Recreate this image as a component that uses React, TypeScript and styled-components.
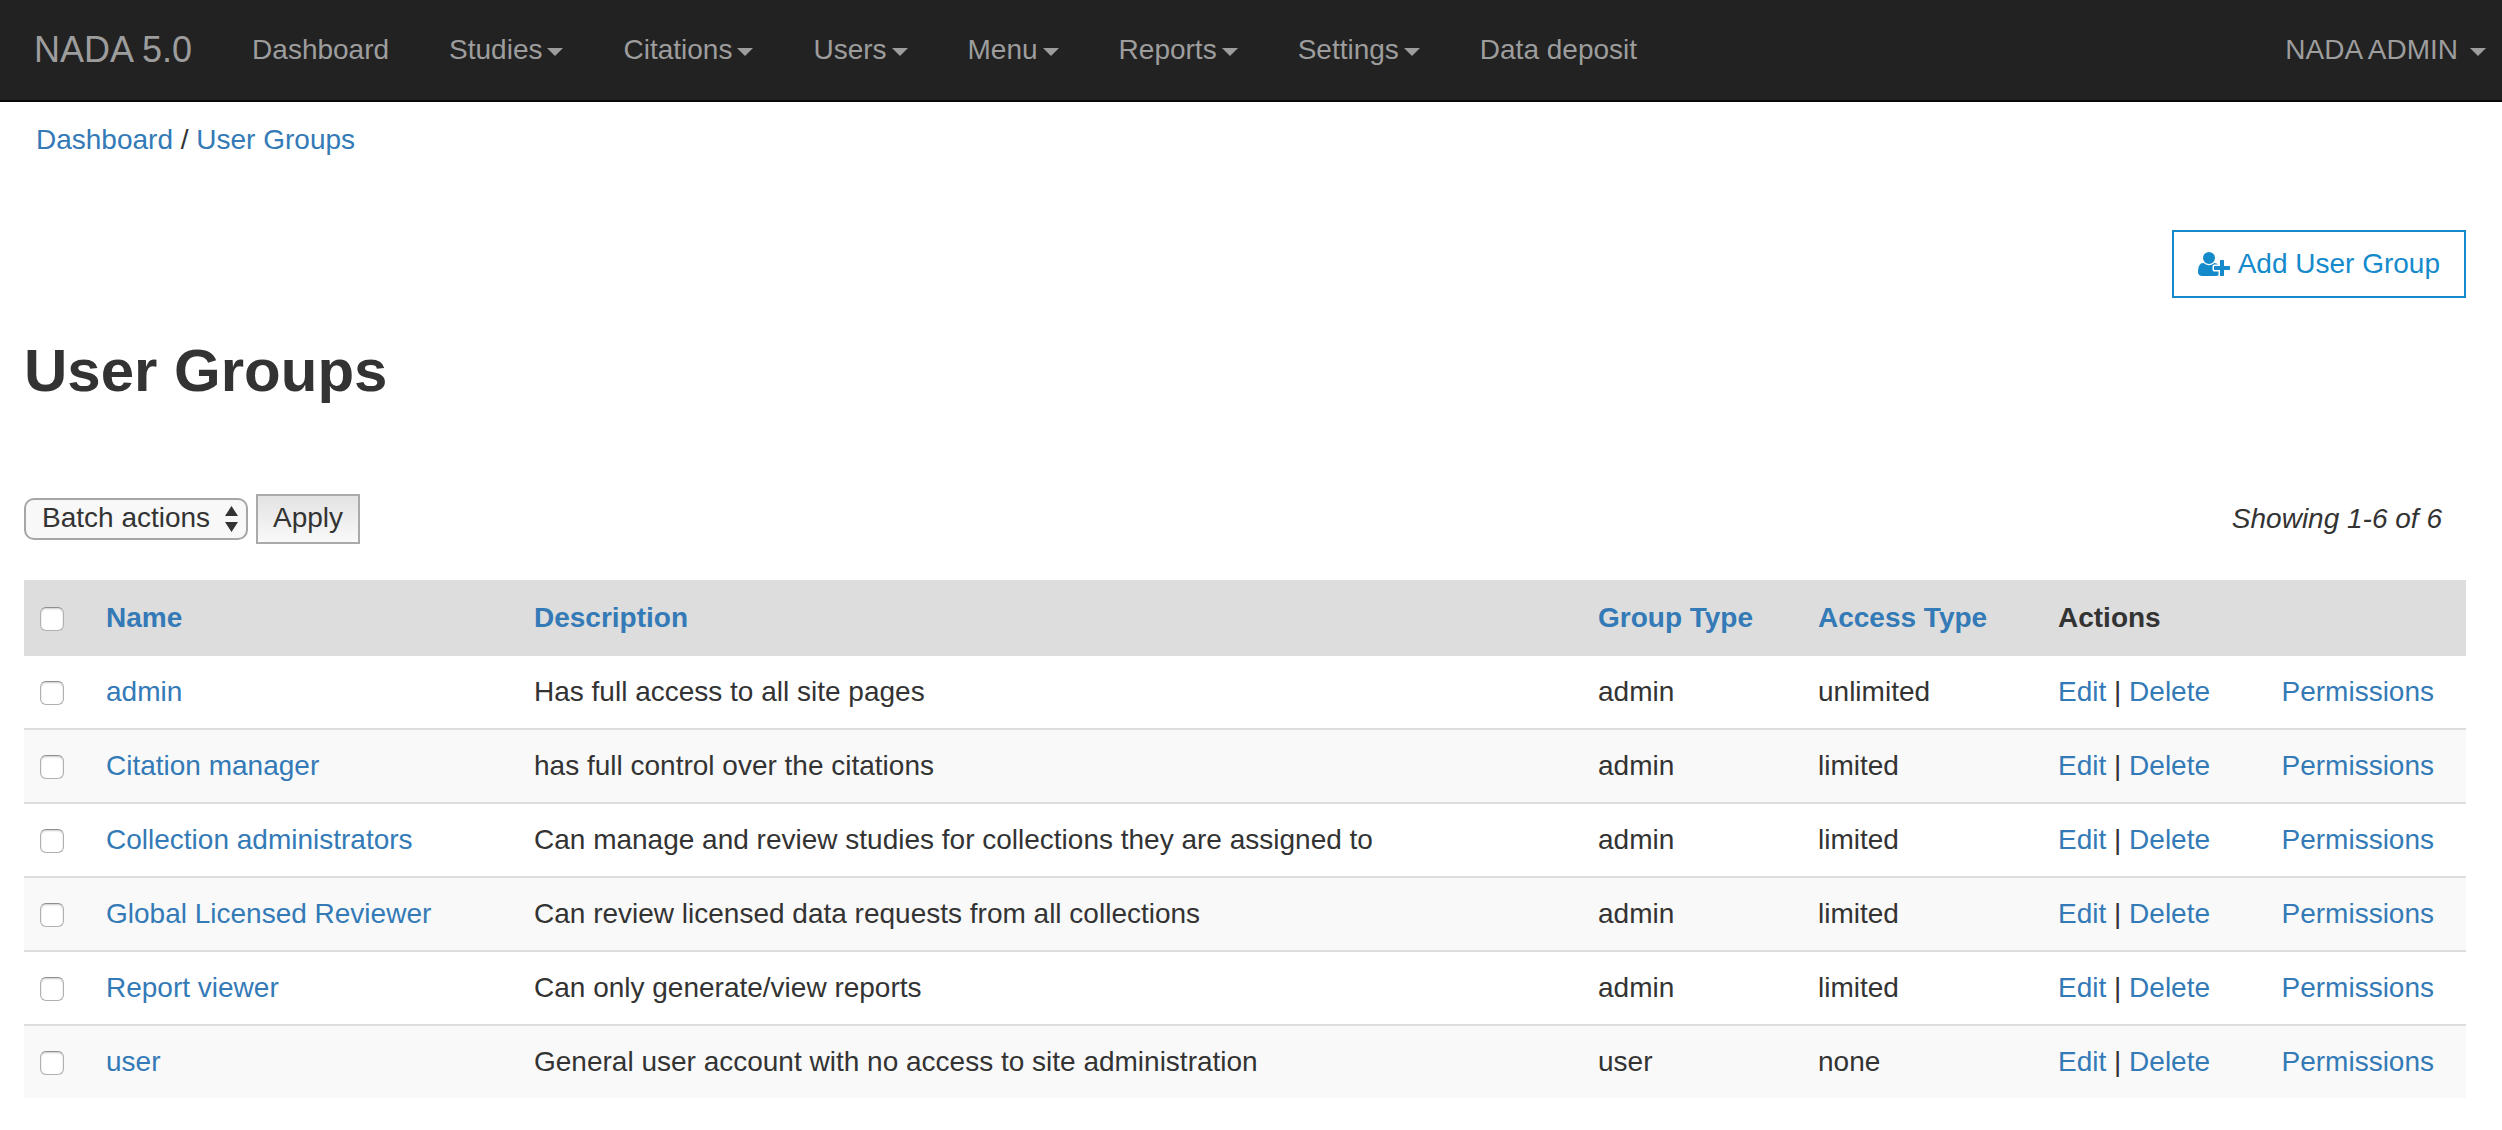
import React, { useState } from "react";
import styled, { createGlobalStyle } from "styled-components";

const GlobalStyle = createGlobalStyle`
  *, *::before, *::after { box-sizing: border-box; }
  body {
    margin: 0;
    background: #fff;
    color: #333;
    font-family: "Helvetica Neue", "Liberation Sans", Helvetica, Arial, sans-serif;
    font-size: 28px;
    line-height: 40px;
  }
`;

const Link = styled.a`
  color: #337ab7;
  text-decoration: none;
  &:hover { text-decoration: underline; }
`;

const Navbar = styled.nav`
  display: flex;
  align-items: center;
  min-height: 102px;
  padding-left: 4px;
  background: #222;
  border-bottom: 2px solid #080808;
`;

const Brand = styled.a`
  padding: 0 30px;
  color: #9d9d9d;
  font-size: 36px;
  text-decoration: none;
  white-space: nowrap;
`;

const NavList = styled.ul`
  display: flex;
  flex: 1;
  margin: 0;
  padding: 0;
  list-style: none;
`;

const NavItem = styled.li<{ $end?: boolean }>`
  margin-left: ${(p) => (p.$end ? "auto" : "0")};
`;

const NavLink = styled.a<{ $gap?: number; $edge?: boolean }>`
  display: flex;
  align-items: center;
  gap: ${(p) => p.$gap ?? 5}px;
  padding: 30px ${(p) => (p.$edge ? 16 : 30)}px 30px 30px;
  color: #9d9d9d;
  text-decoration: none;
  white-space: nowrap;
`;

const Caret = styled.span`
  width: 0;
  height: 0;
  margin-top: 4px;
  border-top: 8px solid currentColor;
  border-left: 8px solid transparent;
  border-right: 8px solid transparent;
`;

const Breadcrumb = styled.nav`
  padding: 18px 36px;
`;

const Page = styled.main`
  padding: 0 36px 32px 24px;
`;

const ActionBar = styled.div`
  display: flex;
  justify-content: flex-end;
  padding-top: 52px;
`;

const AddButton = styled.a`
  display: flex;
  align-items: center;
  gap: 8px;
  padding: 12px 24px;
  border: 2px solid #158acb;
  color: #158acb;
  text-decoration: none;
  white-space: nowrap;
`;

const Title = styled.h1`
  margin: 38px 0 88px;
  font-size: 60px;
  line-height: 70px;
`;

const Toolbar = styled.form`
  display: flex;
  align-items: center;
  gap: 8px;
  margin-bottom: 36px;
`;

const SelectBox = styled.div`
  position: relative;
  color: #333;
`;

const Select = styled.select`
  display: block;
  appearance: none;
  width: 224px;
  height: 42px;
  padding: 0 32px 2px 16px;
  border: 2px solid #a6a6a6;
  border-radius: 10px;
  background: #f8f8f8;
  color: inherit;
  font: inherit;
  line-height: 36px;
`;

const SelectArrows = styled.svg`
  position: absolute;
  top: 8px;
  right: 10px;
  pointer-events: none;
`;

const ApplyButton = styled.button`
  height: 50px;
  padding: 0 15px 2px;
  border: 2px solid #aaa;
  background: linear-gradient(#e3e3e3, #f9f9f9);
  color: inherit;
  font: inherit;
`;

const Summary = styled.em`
  margin-left: auto;
  padding-right: 24px;
`;

const Table = styled.table`
  width: 100%;
  border-collapse: separate;
  border-spacing: 0;
  table-layout: fixed;
`;

const Column = styled.col<{ $width?: number }>`
  width: ${(p) => (p.$width ? `${p.$width}px` : "auto")};
`;

const HeadCell = styled.th`
  height: 74px;
  padding: 2px 16px 0;
  background: #ddd;
  text-align: left;
`;

const Row = styled.tr`
  &:nth-child(even) { background: #f9f9f9; }
`;

const Cell = styled.td`
  height: 74px;
  padding: 0 16px;
  border-top: 2px solid #ddd;
`;

const RowLinks = styled.div`
  display: flex;
  justify-content: space-between;
  padding-right: 16px;
`;

const Checkbox = styled.input`
  display: block;
  appearance: none;
  width: 24px;
  height: 24px;
  margin: 2px 0 0;
  border: 1px solid #b0b0b0;
  border-top-color: #8e8e8e;
  border-radius: 6px;
  background: #fff;
  box-shadow: inset 0 1px 2px #ccc;
  &:checked { background: #337ab7; }
`;

const menu = [
  { label: "Dashboard" },
  { label: "Studies", dropdown: true },
  { label: "Citations", dropdown: true },
  { label: "Users", dropdown: true },
  { label: "Menu", dropdown: true },
  { label: "Reports", dropdown: true },
  { label: "Settings", dropdown: true },
  { label: "Data deposit" },
];

const groups = [
  { name: "admin", description: "Has full access to all site pages", type: "admin", access: "unlimited" },
  { name: "Citation manager", description: "has full control over the citations", type: "admin", access: "limited" },
  { name: "Collection administrators", description: "Can manage and review studies for collections they are assigned to", type: "admin", access: "limited" },
  { name: "Global Licensed Reviewer", description: "Can review licensed data requests from all collections", type: "admin", access: "limited" },
  { name: "Report viewer", description: "Can only generate/view reports", type: "admin", access: "limited" },
  { name: "user", description: "General user account with no access to site administration", type: "user", access: "none" },
];

function UserPlusIcon() {
  return (
    <svg width="32" height="28" viewBox="0 0 2048 1792" fill="currentColor" aria-hidden="true">
      <path d="M704 896q-159 0-271.5-112.5t-112.5-271.5 112.5-271.5 271.5-112.5 271.5 112.5 112.5 271.5-112.5 271.5-271.5 112.5zm960 128h352q13 0 22.5 9.5t9.5 22.5v192q0 13-9.5 22.5t-22.5 9.5h-352v352q0 13-9.5 22.5t-22.5 9.5h-192q-13 0-22.5-9.5t-9.5-22.5v-352h-352q-13 0-22.5-9.5t-9.5-22.5v-192q0-13 9.5-22.5t22.5-9.5h352v-352q0-13 9.5-22.5t22.5-9.5h192q13 0 22.5 9.5t9.5 22.5v352zm-736 224q0 52 38 90t90 38h256v238q-68 50-171 50h-874q-121 0-194-69t-73-190q0-53 3.5-103.5t14-109 26.5-108.5 43-97.5 62-81 85.5-53.5 111.5-20q19 0 39 17 79 61 154.5 91.5t164.5 30.5 164.5-30.5 154.5-91.5q20-17 39-17 132 0 217 96h-223q-52 0-90 38t-38 90v192z" />
    </svg>
  );
}

export default function App() {
  const [selected, setSelected] = useState<string[]>([]);
  const allSelected = selected.length === groups.length;

  const toggle = (name: string) =>
    setSelected((current) =>
      current.includes(name) ? current.filter((n) => n !== name) : [...current, name]
    );

  return (
    <>
      <GlobalStyle />
      <Navbar>
        <Brand href="#">NADA 5.0</Brand>
        <NavList>
          {menu.map((item) => (
            <NavItem key={item.label}>
              <NavLink href="#">
                {item.label}
                {item.dropdown && <Caret />}
              </NavLink>
            </NavItem>
          ))}
          <NavItem $end>
            <NavLink href="#" $gap={12} $edge>
              NADA ADMIN
              <Caret />
            </NavLink>
          </NavItem>
        </NavList>
      </Navbar>

      <Breadcrumb aria-label="Breadcrumb">
        <Link href="#">Dashboard</Link> / <Link href="#">User Groups</Link>
      </Breadcrumb>

      <Page>
        <ActionBar>
          <AddButton href="#">
            <UserPlusIcon />
            Add User Group
          </AddButton>
        </ActionBar>

        <Title>User Groups</Title>

        <Toolbar onSubmit={(e) => e.preventDefault()}>
          <SelectBox>
            <Select aria-label="Batch actions" defaultValue="">
              <option value="">Batch actions</option>
            </Select>
            <SelectArrows width="13" height="26" viewBox="0 0 13 26" fill="currentColor" aria-hidden="true">
              <path d="M6.5 0 13 10H0zM6.5 26 13 16H0z" />
            </SelectArrows>
          </SelectBox>
          <ApplyButton type="submit">Apply</ApplyButton>
          <Summary>Showing 1-6 of 6</Summary>
        </Toolbar>

        <Table>
          <colgroup>
            <Column $width={66} />
            <Column $width={428} />
            <Column />
            <Column $width={220} />
            <Column $width={240} />
            <Column $width={424} />
          </colgroup>
          <thead>
            <tr>
              <HeadCell>
                <Checkbox
                  type="checkbox"
                  aria-label="Select all groups"
                  checked={allSelected}
                  onChange={() => setSelected(allSelected ? [] : groups.map((g) => g.name))}
                />
              </HeadCell>
              <HeadCell><Link href="#">Name</Link></HeadCell>
              <HeadCell><Link href="#">Description</Link></HeadCell>
              <HeadCell><Link href="#">Group Type</Link></HeadCell>
              <HeadCell><Link href="#">Access Type</Link></HeadCell>
              <HeadCell>Actions</HeadCell>
            </tr>
          </thead>
          <tbody>
            {groups.map((group) => (
              <Row key={group.name}>
                <Cell>
                  <Checkbox
                    type="checkbox"
                    aria-label={`Select ${group.name}`}
                    checked={selected.includes(group.name)}
                    onChange={() => toggle(group.name)}
                  />
                </Cell>
                <Cell><Link href="#">{group.name}</Link></Cell>
                <Cell>{group.description}</Cell>
                <Cell>{group.type}</Cell>
                <Cell>{group.access}</Cell>
                <Cell>
                  <RowLinks>
                    <span>
                      <Link href="#">Edit</Link> | <Link href="#">Delete</Link>
                    </span>
                    <Link href="#">Permissions</Link>
                  </RowLinks>
                </Cell>
              </Row>
            ))}
          </tbody>
        </Table>
      </Page>
    </>
  );
}
